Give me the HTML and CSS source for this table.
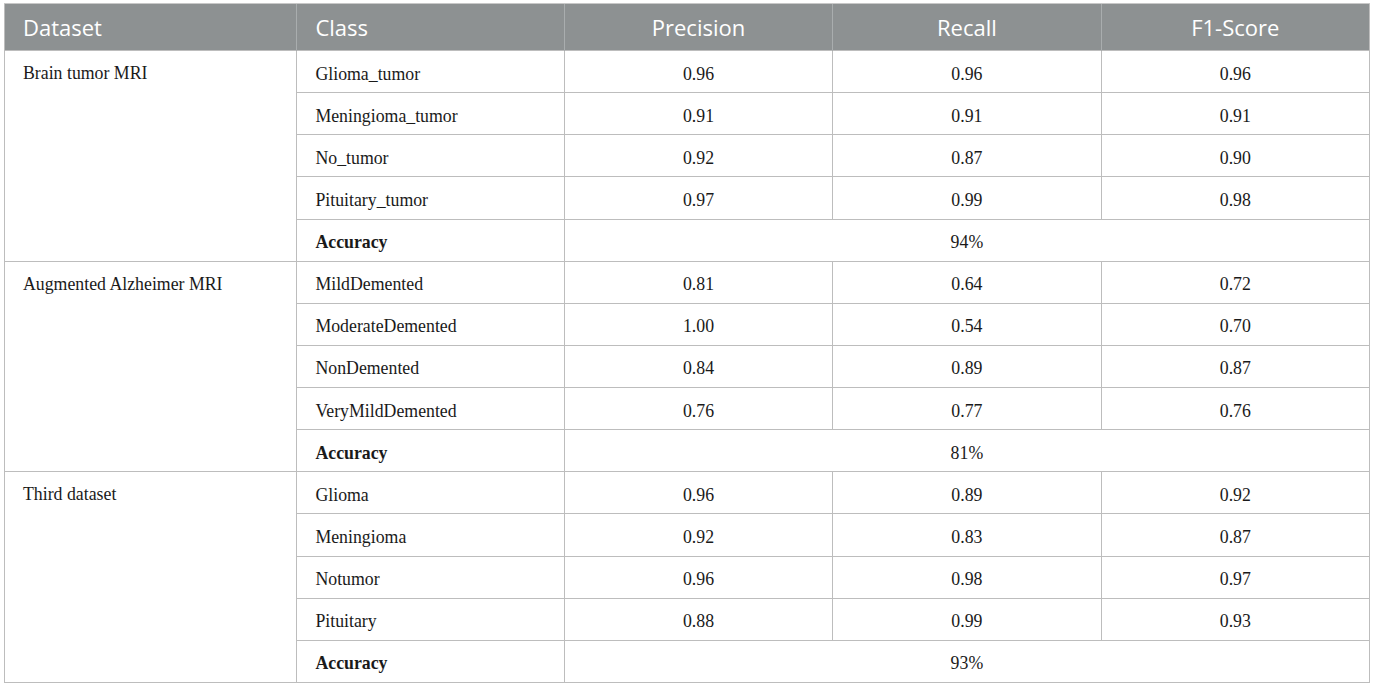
FILE: index.html
```html
<!DOCTYPE html>
<html>
<head>
<meta charset="utf-8">
<link rel="stylesheet" href="styles.css">
</head>
<body>
<table class="results">
  <colgroup>
    <col class="c-dataset"><col class="c-class"><col class="c-num"><col class="c-num"><col class="c-num">
  </colgroup>
  <thead>
    <tr><th class="left">Dataset</th><th class="left">Class</th><th>Precision</th><th>Recall</th><th>F1-Score</th></tr>
  </thead>
  <tbody>
    <tr><td rowspan="5" class="ds">Brain tumor MRI</td><td class="cls">Glioma_tumor</td><td>0.96</td><td>0.96</td><td>0.96</td></tr>
    <tr><td class="cls">Meningioma_tumor</td><td>0.91</td><td>0.91</td><td>0.91</td></tr>
    <tr><td class="cls">No_tumor</td><td>0.92</td><td>0.87</td><td>0.90</td></tr>
    <tr><td class="cls">Pituitary_tumor</td><td>0.97</td><td>0.99</td><td>0.98</td></tr>
    <tr><td class="cls acc">Accuracy</td><td colspan="3">94%</td></tr>
    <tr><td rowspan="5" class="ds">Augmented Alzheimer MRI</td><td class="cls">MildDemented</td><td>0.81</td><td>0.64</td><td>0.72</td></tr>
    <tr><td class="cls">ModerateDemented</td><td>1.00</td><td>0.54</td><td>0.70</td></tr>
    <tr><td class="cls">NonDemented</td><td>0.84</td><td>0.89</td><td>0.87</td></tr>
    <tr><td class="cls">VeryMildDemented</td><td>0.76</td><td>0.77</td><td>0.76</td></tr>
    <tr><td class="cls acc">Accuracy</td><td colspan="3">81%</td></tr>
    <tr><td rowspan="5" class="ds">Third dataset</td><td class="cls">Glioma</td><td>0.96</td><td>0.89</td><td>0.92</td></tr>
    <tr><td class="cls">Meningioma</td><td>0.92</td><td>0.83</td><td>0.87</td></tr>
    <tr><td class="cls">Notumor</td><td>0.96</td><td>0.98</td><td>0.97</td></tr>
    <tr><td class="cls">Pituitary</td><td>0.88</td><td>0.99</td><td>0.93</td></tr>
    <tr><td class="cls acc">Accuracy</td><td colspan="3">93%</td></tr>
  </tbody>
</table>
</body>
</html>
```
FILE: styles.css
```css
html, body {
  margin: 0;
  padding: 0;
  background: #ffffff;
}
.results {
  margin: 3px 0 0 4px;
  width: 1366px;
  border-collapse: collapse;
  table-layout: fixed;
  border: 1px solid #bdbdbd;
}
.c-dataset { width: 292px; }
.c-class { width: 267px; }
.c-num { width: 268px; }
.results th {
  background: #8d9192;
  color: #ffffff;
  font-family: "Open Sans", "Noto Sans", sans-serif;
  font-weight: 400;
  font-size: 22px;
  height: 47px;
  padding: 0 18px;
  text-align: center;
  vertical-align: middle;
  border-left: 1px solid #a9adae;
  border-top: 1px solid #c8c8c8;
  box-sizing: border-box;
}
.results th:first-child { border-left: 1px solid #bdbdbd; }
.results th.left { text-align: left; }
.results td {
  font-family: "Liberation Serif", "Times New Roman", serif;
  font-size: 17.8px;
  color: #1a1a1a;
  height: 42.13px;
  padding: 5px 18px 0;
  text-align: center;
  vertical-align: middle;
  border: 1px solid #bdbdbd;
  box-sizing: border-box;
}
.results td.ds {
  text-align: left;
  vertical-align: top;
  padding-top: 12px;
}
.results td.cls { text-align: left; }
.results td.acc { font-weight: 700; }
```
